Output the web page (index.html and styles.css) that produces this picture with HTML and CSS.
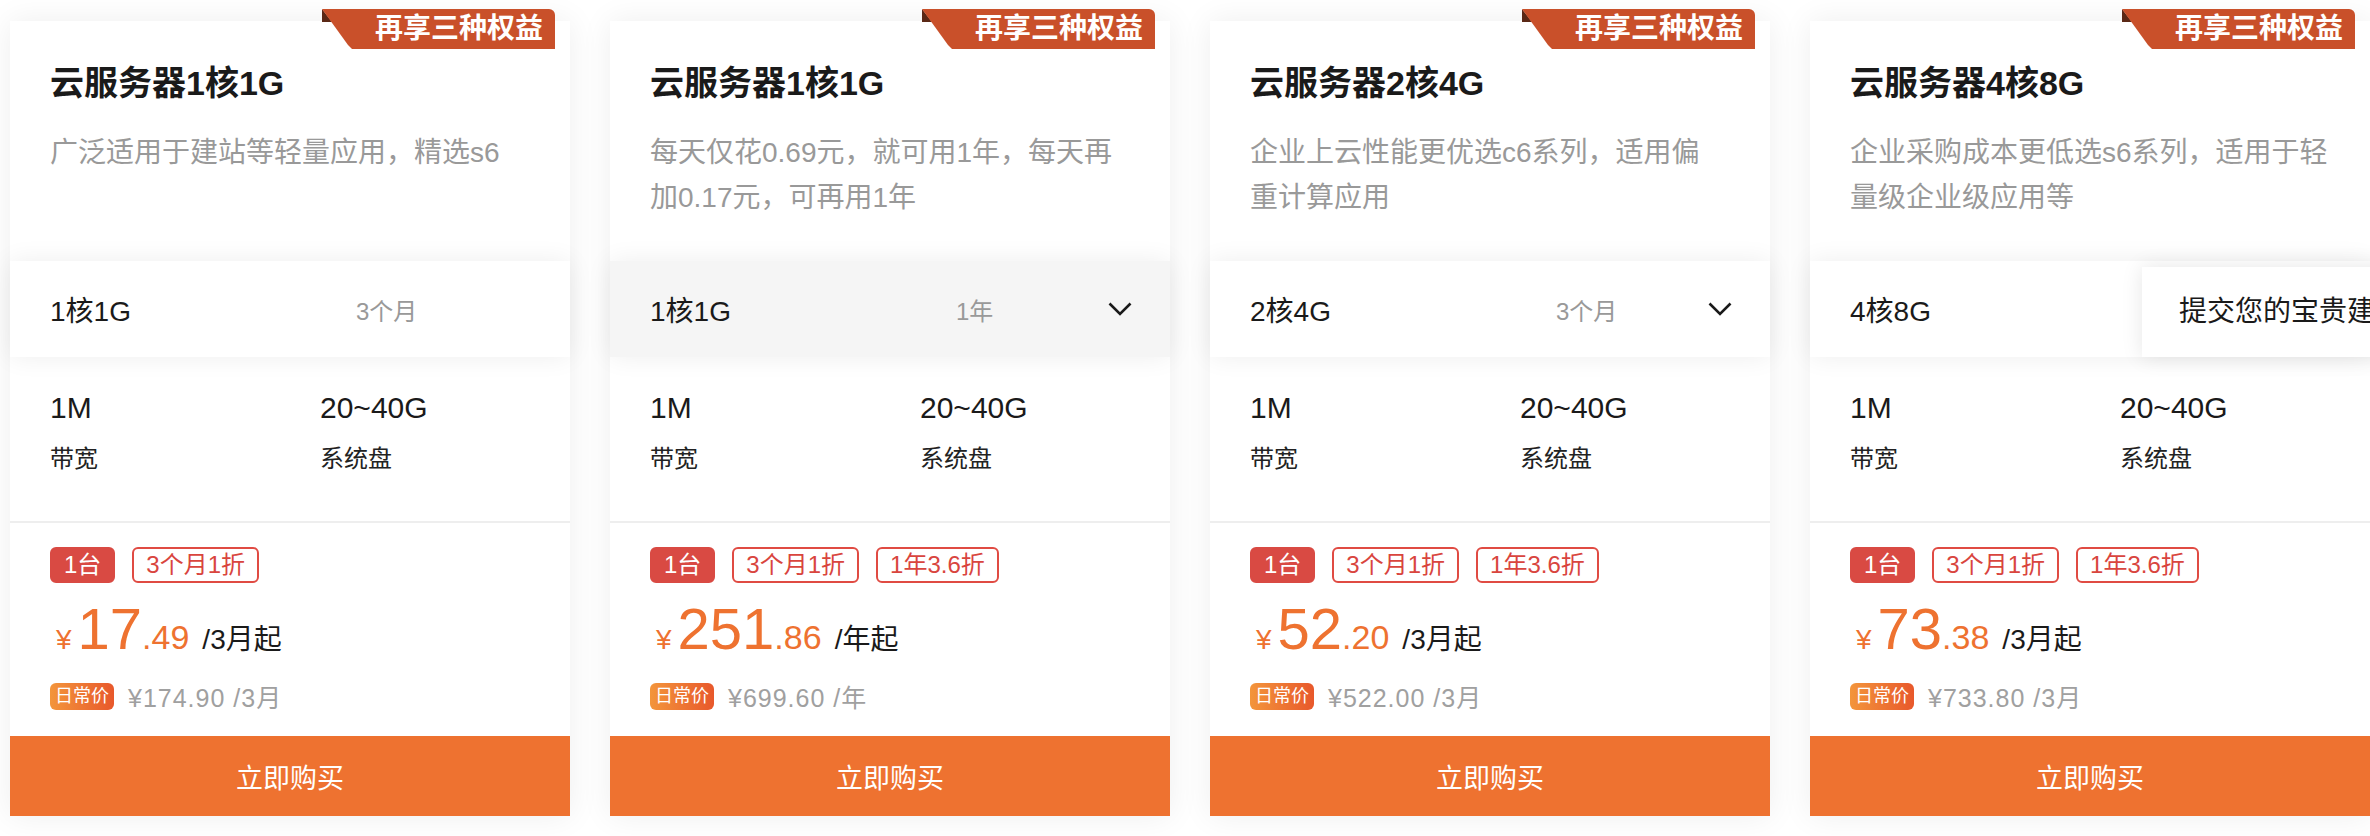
FILE: index.html
```html
<!DOCTYPE html>
<html lang="zh-CN">
<head>
    <meta charset="UTF-8">
    <meta name="viewport" content="width=device-width, initial-scale=1.0">
    <title>云服务器</title>
    <link rel="stylesheet" href="styles.css">
</head>
<body>
    <div class="plans">
        <!-- 1核1G 3个月 -->
        <div class="plan">
            <div class="ribbon"><span>再享三种权益</span></div>
            <div class="plan-head">
                <h2 class="plan-title">云服务器1核1G</h2>
                <p class="plan-desc">广泛适用于建站等轻量应用，精选s6</p>
            </div>
            <div class="plan-select">
                <span class="select-spec">1核1G</span>
                <span class="select-time">3个月</span>
            </div>
            <div class="plan-specs">
                <div class="spec">
                    <div class="spec-value">1M</div>
                    <div class="spec-label">带宽</div>
                </div>
                <div class="spec">
                    <div class="spec-value">20~40G</div>
                    <div class="spec-label">系统盘</div>
                </div>
            </div>
            <div class="plan-price">
                <div class="tags">
                    <span class="tag tag-fill">1台</span>
                    <span class="tag">3个月1折</span>
                </div>
                <div class="price">
                    <span class="price-yen">¥</span><span class="price-int">17</span><span class="price-dec">.49</span><span class="price-unit">/3月起</span>
                </div>
                <div class="old-price">
                    <span class="old-badge">日常价</span>
                    <span class="old-text">¥174.90 /3月</span>
                </div>
            </div>
            <button class="buy">立即购买</button>
        </div>

        <!-- 1核1G 1年 -->
        <div class="plan">
            <div class="ribbon"><span>再享三种权益</span></div>
            <div class="plan-head">
                <h2 class="plan-title">云服务器1核1G</h2>
                <p class="plan-desc">每天仅花0.69元，就可用1年，每天再加0.17元，可再用1年</p>
            </div>
            <div class="plan-select is-hover">
                <span class="select-spec">1核1G</span>
                <span class="select-time">1年</span>
                <svg class="chevron" viewBox="0 0 24 14" width="24" height="14"><polyline points="1.5,1.5 12,12 22.5,1.5"/></svg>
            </div>
            <div class="plan-specs">
                <div class="spec">
                    <div class="spec-value">1M</div>
                    <div class="spec-label">带宽</div>
                </div>
                <div class="spec">
                    <div class="spec-value">20~40G</div>
                    <div class="spec-label">系统盘</div>
                </div>
            </div>
            <div class="plan-price">
                <div class="tags">
                    <span class="tag tag-fill">1台</span>
                    <span class="tag">3个月1折</span>
                    <span class="tag">1年3.6折</span>
                </div>
                <div class="price">
                    <span class="price-yen">¥</span><span class="price-int">251</span><span class="price-dec">.86</span><span class="price-unit">/年起</span>
                </div>
                <div class="old-price">
                    <span class="old-badge">日常价</span>
                    <span class="old-text">¥699.60 /年</span>
                </div>
            </div>
            <button class="buy">立即购买</button>
        </div>

        <!-- 2核4G -->
        <div class="plan">
            <div class="ribbon"><span>再享三种权益</span></div>
            <div class="plan-head">
                <h2 class="plan-title">云服务器2核4G</h2>
                <p class="plan-desc">企业上云性能更优选c6系列，适用偏<br>重计算应用</p>
            </div>
            <div class="plan-select">
                <span class="select-spec">2核4G</span>
                <span class="select-time">3个月</span>
                <svg class="chevron" viewBox="0 0 24 14" width="24" height="14"><polyline points="1.5,1.5 12,12 22.5,1.5"/></svg>
            </div>
            <div class="plan-specs">
                <div class="spec">
                    <div class="spec-value">1M</div>
                    <div class="spec-label">带宽</div>
                </div>
                <div class="spec">
                    <div class="spec-value">20~40G</div>
                    <div class="spec-label">系统盘</div>
                </div>
            </div>
            <div class="plan-price">
                <div class="tags">
                    <span class="tag tag-fill">1台</span>
                    <span class="tag">3个月1折</span>
                    <span class="tag">1年3.6折</span>
                </div>
                <div class="price">
                    <span class="price-yen">¥</span><span class="price-int">52</span><span class="price-dec">.20</span><span class="price-unit">/3月起</span>
                </div>
                <div class="old-price">
                    <span class="old-badge">日常价</span>
                    <span class="old-text">¥522.00 /3月</span>
                </div>
            </div>
            <button class="buy">立即购买</button>
        </div>

        <!-- 4核8G -->
        <div class="plan">
            <div class="ribbon"><span>再享三种权益</span></div>
            <div class="plan-head">
                <h2 class="plan-title">云服务器4核8G</h2>
                <p class="plan-desc">企业采购成本更低选s6系列，适用于轻量级企业级应用等</p>
            </div>
            <div class="plan-select">
                <span class="select-spec">4核8G</span>
                <div class="feedback">提交您的宝贵建议</div>
            </div>
            <div class="plan-specs">
                <div class="spec">
                    <div class="spec-value">1M</div>
                    <div class="spec-label">带宽</div>
                </div>
                <div class="spec">
                    <div class="spec-value">20~40G</div>
                    <div class="spec-label">系统盘</div>
                </div>
            </div>
            <div class="plan-price">
                <div class="tags">
                    <span class="tag tag-fill">1台</span>
                    <span class="tag">3个月1折</span>
                    <span class="tag">1年3.6折</span>
                </div>
                <div class="price">
                    <span class="price-yen">¥</span><span class="price-int">73</span><span class="price-dec">.38</span><span class="price-unit">/3月起</span>
                </div>
                <div class="old-price">
                    <span class="old-badge">日常价</span>
                    <span class="old-text">¥733.80 /3月</span>
                </div>
            </div>
            <button class="buy">立即购买</button>
        </div>
    </div>
</body>
</html>
```

FILE: styles.css
```css
body {
    margin: 0;
    background-color: #fff;
    font-family: 'Liberation Sans', 'Noto Sans CJK SC', sans-serif;
    color: #1a1a1a;
    overflow: hidden;
}

.plans {
    display: flex;
    gap: 40px;
    padding: 21px 0 30px 10px;
    width: 2370px;
    box-sizing: border-box;
    overflow: hidden;
}

.plan {
    flex: 0 0 560px;
    position: relative; /* for the ribbon */
    background-color: #fff;
    box-shadow: 0 0 30px rgba(0, 0, 0, 0.07);
}

/* Corner ribbon */
.ribbon {
    position: absolute;
    top: -12px;
    right: 15px;
    width: 233px;
    height: 40px;
    z-index: 3;
}

.ribbon::before {
    content: '';
    position: absolute;
    left: 0;
    top: 0;
    width: 12px;
    height: 13px;
    background-color: #5b2816;
    clip-path: polygon(0 0, 10px 13px, 0 13px);
}

.ribbon::after {
    content: '';
    position: absolute;
    inset: 0;
    background-color: #c9502a;
    border-top-right-radius: 6px;
    clip-path: polygon(0 0, 100% 0, 100% 100%, 30px 100%, 26px 36px);
}

.ribbon span {
    position: relative;
    z-index: 1;
    display: block;
    text-align: right;
    padding-right: 12px;
    font-size: 28px;
    line-height: 40px;
    font-weight: 700;
    color: #fff;
}

.plan-head {
    height: 240px;
    padding: 40px 40px 0;
    box-sizing: border-box;
}

.plan-title {
    margin: 0;
    font-size: 34px;
    line-height: 44px;
    font-weight: 700;
    color: #1a1a1a;
}

.plan-desc {
    margin: 25px 0 0;
    font-size: 28px;
    line-height: 45px;
    color: #999;
}

/* Instance selector */
.plan-select {
    position: relative;
    z-index: 1;
    height: 96px;
    display: flex;
    align-items: center;
    padding: 0 40px;
    background-color: #fff;
    box-shadow: 0 0 24px rgba(0, 0, 0, 0.07);
}

.plan-select.is-hover {
    background-color: #f5f5f5;
}

.select-spec {
    width: 306px;
    font-size: 28px;
    color: #1a1a1a;
}

.select-time {
    flex: 1;
    font-size: 24px;
    color: #999;
}

.chevron {
    fill: none;
    stroke: #1a1a1a;
    stroke-width: 2.6;
    margin-right: -2px;
}

/* Floating feedback tip */
.feedback {
    position: absolute;
    left: 332px;
    top: 6px;
    width: 320px;
    height: 90px;
    padding-left: 37px;
    box-sizing: border-box;
    background-color: #fff;
    box-shadow: 0 0 20px rgba(0, 0, 0, 0.1);
    font-size: 28px;
    line-height: 90px;
    color: #1a1a1a;
    white-space: nowrap;
}

.plan-specs {
    height: 166px;
    padding: 33px 40px 0;
    box-sizing: border-box;
    display: grid;
    grid-template-columns: 270px 1fr;
    border-bottom: 2px solid #eee;
}

.spec-value {
    font-size: 30px;
    line-height: 36px;
    color: #1a1a1a;
}

.spec-label {
    margin-top: 18px;
    font-size: 24px;
    line-height: 30px;
    color: #222;
}

.plan-price {
    height: 213px;
    padding: 24px 40px 0;
    box-sizing: border-box;
}

.tags {
    display: flex;
    gap: 17px;
}

.tag {
    border: 2px solid #e04b43;
    border-radius: 6px;
    padding: 0 12px;
    font-size: 24px;
    line-height: 32px;
    color: #d9453e;
}

.tag-fill {
    background-color: #d94a43;
    border-color: #d94a43;
    color: #fff;
}

.price {
    margin-top: 16px;
    height: 60px;
    font-size: 58px;
    line-height: 60px;
    color: #ee7230;
    white-space: nowrap;
}

.price-yen {
    font-size: 28px;
    margin: 0 6px 0 6px;
}

.price-dec {
    font-size: 34px;
}

.price-unit {
    margin-left: 13px;
    font-size: 28px;
    color: #1a1a1a;
}

.old-price {
    margin-top: 19px;
    display: flex;
    align-items: center;
}

.old-badge {
    padding: 0 5px;
    border-radius: 6px;
    background: linear-gradient(90deg, #f3953b, #e8582b);
    font-size: 18px;
    line-height: 27px;
    color: #fff;
}

.old-text {
    margin-left: 14px;
    font-size: 25px;
    letter-spacing: 1px;
    color: #a0a0a0;
}

.buy {
    display: block;
    width: 100%;
    height: 80px;
    border: none;
    background-color: #ee7230;
    color: #fff;
    font-family: inherit;
    font-size: 27px;
    cursor: pointer;
}
```
